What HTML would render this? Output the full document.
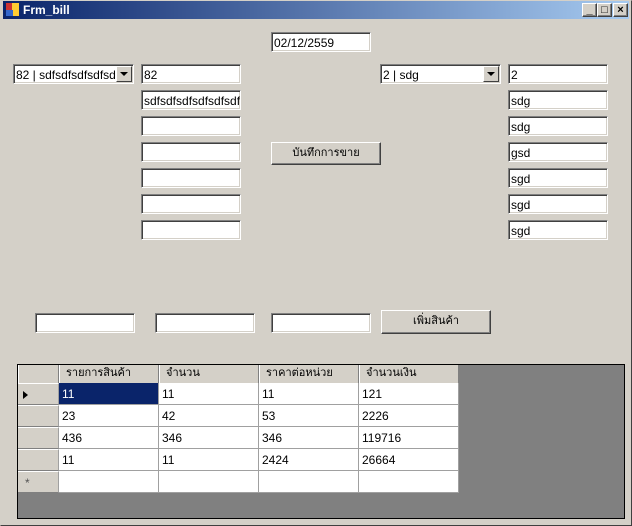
<!DOCTYPE html><html><head><meta charset="utf-8"><style>
body{margin:0;width:632px;height:526px;background:#d4d0c8;font-family:"Liberation Sans","DejaVu Sans",sans-serif;font-size:12px;position:relative;overflow:hidden}
.a{position:absolute;box-sizing:border-box}
.tb{background:#fff;border:1px solid;border-color:#808080 #fff #fff #808080;box-shadow:inset 1px 1px 0 #404040,inset -1px -1px 0 #d4d0c8;padding:3px 0 0 2px;white-space:nowrap;overflow:hidden;height:20px;width:100px;line-height:14px}
.btn{border:1px solid;border-color:#fff #404040 #404040 #fff;box-shadow:inset -1px -1px 0 #808080;text-align:center;line-height:21px;font-size:11px}
.dd{position:absolute;right:1px;top:1px;width:16px;height:16px;background:#d4d0c8;border:1px solid;border-color:#fff #404040 #404040 #fff;box-sizing:border-box}
.dd:after{content:"";position:absolute;left:3px;top:5px;border:4px solid transparent;border-top:4px solid #000;border-bottom:0}
.c{position:absolute;box-sizing:border-box;border-right:1px solid #a0a0a0;border-bottom:1px solid #a0a0a0;padding:4px 0 0 3px;background:#fff;height:22px}
.h{background:#d4d0c8;padding:2px 0 0 6px;height:18px;border-right:1px solid #808080;border-left:1px solid #fff;font-size:11px;line-height:13px;overflow:hidden;white-space:nowrap}
.rh{background:#d4d0c8;border-top:1px solid #fff;border-bottom:1px solid #808080}
</style></head><body>
<div class="a" style="left:0;top:0;width:632px;height:526px;border:1px solid;border-color:#d4d0c8 #404040 #404040 #d4d0c8"></div>
<div class="a" style="left:3px;top:1px;width:626px;height:18px;background:linear-gradient(90deg,#0a246a,#a6caf0);color:#fff;font-weight:bold;font-size:12px;padding:2px 0 0 20px">Frm_bill</div>
<div class="a" style="left:6px;top:3px;width:7px;height:7px;background:#c33"></div><div class="a" style="left:12px;top:3px;width:7px;height:13px;background:#fc3"></div><div class="a" style="left:6px;top:10px;width:7px;height:6px;background:#36c"></div>
<div class="a btn" style="left:582px;top:3px;width:15px;height:14px;background:#d4d0c8;line-height:12px;font-weight:bold">_</div>
<div class="a btn" style="left:597px;top:3px;width:15px;height:14px;background:#d4d0c8;line-height:12px">□</div>
<div class="a btn" style="left:613px;top:3px;width:15px;height:14px;background:#d4d0c8;line-height:12px;font-weight:bold">×</div>

<div class="a tb" style="left:271px;top:32px">02/12/2559</div>
<div class="a tb" style="left:13px;top:64px;width:121px;padding-right:18px">82 | sdfsdfsdfsdfsdfsd<div class="dd"></div></div>
<div class="a tb" style="left:380px;top:64px;width:121px">2 | sdg<div class="dd"></div></div>
<div class="a tb" style="left:141px;top:64px">82</div>
<div class="a tb" style="left:141px;top:90px">sdfsdfsdfsdfsdfsdf</div>
<div class="a tb" style="left:141px;top:116px"></div>
<div class="a tb" style="left:141px;top:142px"></div>
<div class="a tb" style="left:141px;top:168px"></div>
<div class="a tb" style="left:141px;top:194px"></div>
<div class="a tb" style="left:141px;top:220px"></div>
<div class="a tb" style="left:508px;top:64px">2</div>
<div class="a tb" style="left:508px;top:90px">sdg</div>
<div class="a tb" style="left:508px;top:116px">sdg</div>
<div class="a tb" style="left:508px;top:142px">gsd</div>
<div class="a tb" style="left:508px;top:168px">sgd</div>
<div class="a tb" style="left:508px;top:194px">sgd</div>
<div class="a tb" style="left:508px;top:220px">sgd</div>
<div class="a btn" style="left:271px;top:142px;width:110px;height:23px">บันทึกการขาย</div>
<div class="a tb" style="left:35px;top:313px"></div>
<div class="a tb" style="left:155px;top:313px"></div>
<div class="a tb" style="left:271px;top:313px"></div>
<div class="a btn" style="left:381px;top:310px;width:110px;height:24px">เพิ่มสินค้า</div>

<div class="a" style="left:17px;top:364px;width:608px;height:155px;background:#808080;border:1px solid #000"></div>
<div class="a h" style="left:18px;top:365px;width:41px;"></div>
<div class="a h" style="left:59px;top:365px;width:100px">รายการสินค้า</div>
<div class="a h" style="left:159px;top:365px;width:100px">จำนวน</div>
<div class="a h" style="left:259px;top:365px;width:100px">ราคาต่อหน่วย</div>
<div class="a h" style="left:359px;top:365px;width:100px">จำนวนเงิน</div>
<div class="a c rh" style="left:18px;top:383px;width:41px"><span style="display:inline-block;border:4px solid transparent;border-left:5px solid #000;margin:2px 0 0 2px"></span></div>
<div class="a c rh" style="left:18px;top:405px;width:41px"></div>
<div class="a c rh" style="left:18px;top:427px;width:41px"></div>
<div class="a c rh" style="left:18px;top:449px;width:41px"></div>
<div class="a c rh" style="left:18px;top:471px;width:41px;color:#555;padding-left:7px">*</div>
<div class="a c" style="left:59px;top:383px;width:100px;background:#0a246a;color:#fff">11</div>
<div class="a c" style="left:159px;top:383px;width:100px">11</div>
<div class="a c" style="left:259px;top:383px;width:100px">11</div>
<div class="a c" style="left:359px;top:383px;width:100px">121</div>
<div class="a c" style="left:59px;top:405px;width:100px">23</div>
<div class="a c" style="left:159px;top:405px;width:100px">42</div>
<div class="a c" style="left:259px;top:405px;width:100px">53</div>
<div class="a c" style="left:359px;top:405px;width:100px">2226</div>
<div class="a c" style="left:59px;top:427px;width:100px">436</div>
<div class="a c" style="left:159px;top:427px;width:100px">346</div>
<div class="a c" style="left:259px;top:427px;width:100px">346</div>
<div class="a c" style="left:359px;top:427px;width:100px">119716</div>
<div class="a c" style="left:59px;top:449px;width:100px">11</div>
<div class="a c" style="left:159px;top:449px;width:100px">11</div>
<div class="a c" style="left:259px;top:449px;width:100px">2424</div>
<div class="a c" style="left:359px;top:449px;width:100px">26664</div>
<div class="a c" style="left:59px;top:471px;width:100px"></div>
<div class="a c" style="left:159px;top:471px;width:100px"></div>
<div class="a c" style="left:259px;top:471px;width:100px"></div>
<div class="a c" style="left:359px;top:471px;width:100px"></div>
</body></html>
